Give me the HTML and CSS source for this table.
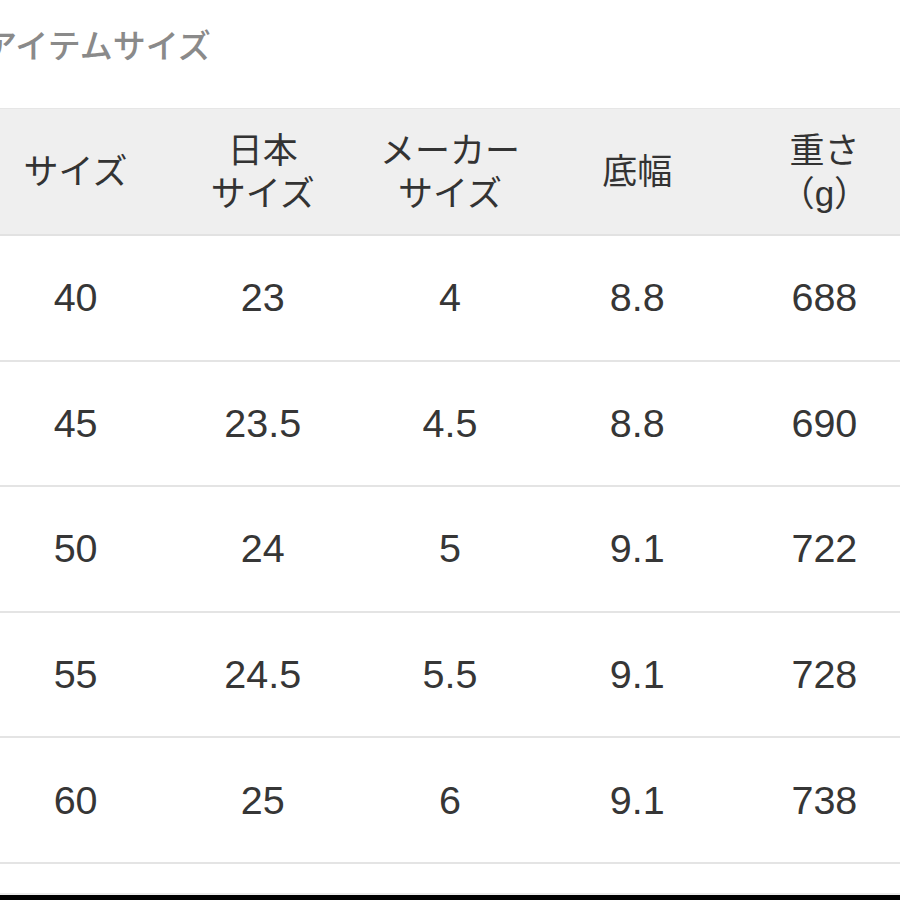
FILE: index.html
```html
<!DOCTYPE html>
<html lang="ja">
<head>
<meta charset="utf-8">
<link rel="stylesheet" href="styles.css">
</head>
<body>
<div class="page">
  <div class="title">アイテムサイズ</div>
  <div class="table">
    <div class="row head">
      <div class="cell">サイズ</div>
      <div class="cell">日本<br>サイズ</div>
      <div class="cell">メーカー<br>サイズ</div>
      <div class="cell">底幅</div>
      <div class="cell">重さ<br>（g）</div>
    </div>
    <div class="row">
      <div class="cell">40</div><div class="cell">23</div><div class="cell">4</div><div class="cell">8.8</div><div class="cell">688</div>
    </div>
    <div class="row">
      <div class="cell">45</div><div class="cell">23.5</div><div class="cell">4.5</div><div class="cell">8.8</div><div class="cell">690</div>
    </div>
    <div class="row">
      <div class="cell">50</div><div class="cell">24</div><div class="cell">5</div><div class="cell">9.1</div><div class="cell">722</div>
    </div>
    <div class="row">
      <div class="cell">55</div><div class="cell">24.5</div><div class="cell">5.5</div><div class="cell">9.1</div><div class="cell">728</div>
    </div>
    <div class="row">
      <div class="cell">60</div><div class="cell">25</div><div class="cell">6</div><div class="cell">9.1</div><div class="cell">738</div>
    </div>
  </div>
  <div class="footer"></div>
</div>
</body>
</html>
```
FILE: styles.css
```css
html, body {
  margin: 0;
  padding: 0;
  background: #fff;
  overflow: hidden;
}
.page {
  width: 900px;
  height: 900px;
  overflow: hidden;
  position: relative;
  font-family: "Liberation Sans", "Noto Sans CJK JP", sans-serif;
  color: #333;
}
.title {
  height: 108px;
  box-sizing: border-box;
  padding-top: 24px;
  margin-left: -16px;
  font-family: "Noto Sans CJK JP", sans-serif;
  font-size: 33px;
  font-weight: 500;
  line-height: 40px;
  color: #8a8a8a;
  white-space: nowrap;
}
.table {
  margin-left: -18px;
  width: 936px;
}
.row {
  display: grid;
  grid-template-columns: repeat(5, 1fr);
  height: 125.6px;
  box-sizing: border-box;
  border-bottom: 2px solid #e4e4e4;
  align-items: center;
  font-size: 39.5px;
  color: #363636;
}
.row.head {
  height: 128px;
  background: #efefef;
  border-top: 1px solid #e6e6e6;
  border-bottom: 2px solid #e2e2e2;
  font-family: "Liberation Sans", "Noto Sans CJK JP", sans-serif;
  font-size: 35px;
  line-height: 43px;
  color: #333;
}
.cell {
  text-align: center;
  white-space: nowrap;
}
.footer {
  margin-top: 29px;
  border-top: 2px solid #ececec;
  height: 12px;
  background: #000;
}
```
